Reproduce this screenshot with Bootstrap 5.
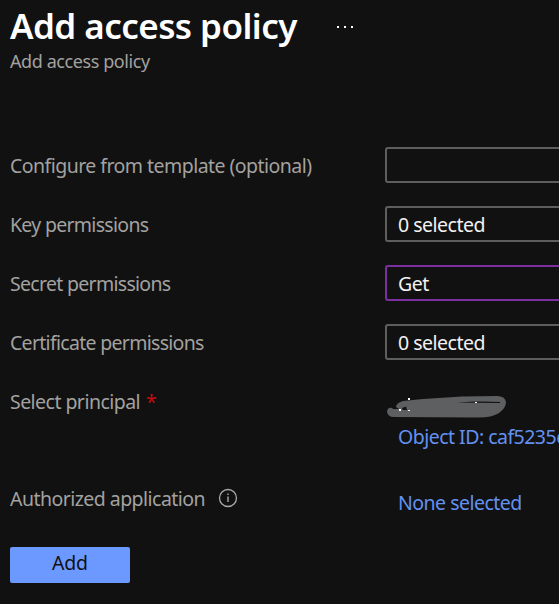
<!DOCTYPE html>
<html lang="en">
<head>
<meta charset="utf-8">
<meta name="viewport" content="width=device-width, initial-scale=1">
<title>Add access policy</title>
<link href="https://cdn.jsdelivr.net/npm/bootstrap@5.3.0/dist/css/bootstrap.min.css" rel="stylesheet">
<style>
body{background:#111;color:#a3a2a0;font-family:"Noto Sans","Open Sans",sans-serif;font-size:19.5px;line-height:26px;letter-spacing:-.6px;height:604px}
.blade{padding:5px 0 0 10px}
.blade-title{font-size:35px;line-height:42px;font-weight:600;color:#fff;letter-spacing:-.55px;width:327px}
.dots{width:18px;height:2px;margin-top:1px}
.subtitle{font-size:18px;line-height:26px;letter-spacing:-.42px;padding-top:1px}
.policy-form{padding-top:73px}
.form-line{height:36px;margin-bottom:23px}
.picker span{padding-top:1px;letter-spacing:-.5px}
.label-cell{width:375px}
.field-label{padding-top:2px;letter-spacing:-.7px}
.template-label{letter-spacing:-.54px}
.picker{height:36px;border:2px solid #605e5c;border-right:0;border-radius:3px 0 0 3px;background:#111;color:#f3f2f1;padding:0 11px}
.picker.active-picker{border-color:#7b2fa0}
.blue-link{color:#6391f2;padding-left:13px;letter-spacing:-.52px}
.required{color:#c80a0f;margin-left:6px}
.principal{height:98px}
.principal-label{padding-top:6px;letter-spacing:-.54px}
.redaction{margin:13px 0 6px 1px}
.app-line{margin-bottom:30px}
.app-label{letter-spacing:-.54px}
.info-mark{margin:-2px 0 0 13px}
.add-btn{width:120px;height:36px;background:#6b99ff;color:#111;border-radius:2px;font-size:19.5px;letter-spacing:-.2px;line-height:24px}
.add-btn:hover{background:#6b99ff;color:#111}
</style>
</head>
<body class="overflow-hidden">
<main class="blade overflow-hidden">
  <header>
    <div class="d-flex align-items-center">
      <h1 class="blade-title mb-0 text-nowrap">Add access policy</h1>
      <svg class="dots" viewBox="0 0 18 2" fill="#fff"><path d="M0 0h2v2H0zM7 0h2v2H7zM14 0h2v2h-2z"/></svg>
    </div>
    <div class="subtitle">Add access policy</div>
  </header>
  <form class="policy-form text-nowrap">
    <div class="form-line d-flex align-items-center">
      <label class="label-cell field-label template-label flex-shrink-0">Configure from template (optional)</label>
      <div class="picker flex-grow-1"></div>
    </div>
    <div class="form-line d-flex align-items-center">
      <label class="label-cell field-label flex-shrink-0">Key permissions</label>
      <div class="picker flex-grow-1 d-flex align-items-center"><span>0 selected</span></div>
    </div>
    <div class="form-line d-flex align-items-center">
      <label class="label-cell field-label flex-shrink-0">Secret permissions</label>
      <div class="picker active-picker flex-grow-1 d-flex align-items-center"><span>Get</span></div>
    </div>
    <div class="form-line d-flex align-items-center">
      <label class="label-cell field-label flex-shrink-0">Certificate permissions</label>
      <div class="picker flex-grow-1 d-flex align-items-center"><span>0 selected</span></div>
    </div>
    <div class="principal d-flex align-items-start">
      <label class="label-cell principal-label flex-shrink-0"><span>Select principal</span><span class="required">*</span></label>
      <div>
        <svg class="redaction d-block" width="121" height="22" viewBox="0 0 121 22">
          <path d="M3 12Q1 13 1 16Q2 21 8 21L90 21.500Q105 22 113 17Q120 12 120 6Q119 0 111 0L76 .5L37 3L17 5Q10 7 10 11L13 13H7Q6 11 3 12Z" fill="#5e5f61"/>
          <path d="M71 6.500Q92 5 114 6V7ZM16 12L20 10.500L21 14L17 14Z" fill="#111"/>
          <path d="M22 2h2v2h-2zM89 6h2v1h-2zM13 13h2v2h-2zM22 14h2v1h-2z" fill="#fff"/>
        </svg>
        <a class="blue-link d-block text-decoration-none">Object ID: caf5235c</a>
      </div>
    </div>
    <div class="form-line app-line d-flex align-items-center">
      <label class="label-cell app-label flex-shrink-0 d-flex align-items-center"><span>Authorized application</span>
        <svg class="info-mark" width="20" height="20" viewBox="0 0 20 20" fill="none" stroke="#a9a9a9"><circle cx="10" cy="10" r="8.500" stroke-width="1.300"/><path d="M10 8.500v5.500M10 5.500v1.500" stroke-width="1.400"/></svg>
      </label>
      <a class="blue-link text-decoration-none pt-2">None selected</a>
    </div>
    <button type="button" class="btn add-btn border-0 p-0 pb-1">Add</button>
  </form>
</main>
<script src="https://cdn.jsdelivr.net/npm/bootstrap@5.3.0/dist/js/bootstrap.bundle.min.js"></script>
</body>
</html>
